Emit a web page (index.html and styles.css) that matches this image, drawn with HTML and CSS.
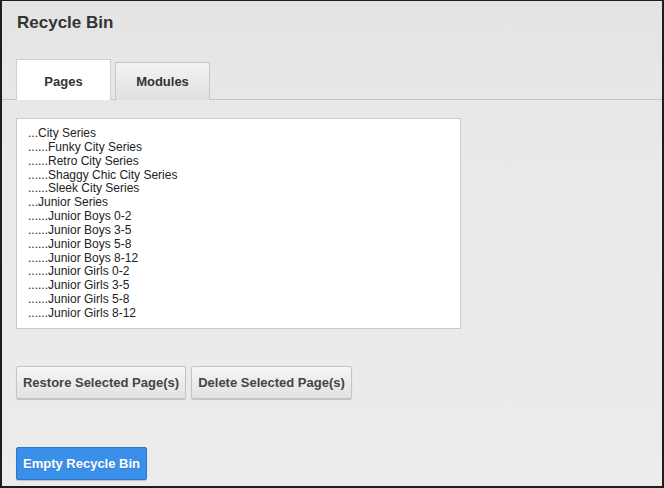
FILE: index.html
```html
<!DOCTYPE html>
<html>
<head>
<meta charset="utf-8">
<link rel="stylesheet" href="styles.css">
</head>
<body>
<div class="frame">
  <h1 class="title">Recycle Bin</h1>
  <div class="tabs">
    <div class="tab active">Pages</div>
    <div class="tab">Modules</div>
  </div>
  <div class="content">
    <div class="listbox">
      <div>...City Series</div>
      <div>......Funky City Series</div>
      <div>......Retro City Series</div>
      <div>......Shaggy Chic City Series</div>
      <div>......Sleek City Series</div>
      <div>...Junior Series</div>
      <div>......Junior Boys 0-2</div>
      <div>......Junior Boys 3-5</div>
      <div>......Junior Boys 5-8</div>
      <div>......Junior Boys 8-12</div>
      <div>......Junior Girls 0-2</div>
      <div>......Junior Girls 3-5</div>
      <div>......Junior Girls 5-8</div>
      <div>......Junior Girls 8-12</div>
    </div>
    <div class="actions">
      <button class="btn">Restore Selected Page(s)</button>
      <button class="btn">Delete Selected Page(s)</button>
    </div>
    <div class="empty-row">
      <button class="btn btn-primary">Empty Recycle Bin</button>
    </div>
  </div>
</div>
</body>
</html>
```

FILE: styles.css
```css
html, body {
  margin: 0;
  padding: 0;
}
body {
  width: 664px;
  height: 488px;
  font-family: "Liberation Sans", Arial, sans-serif;
}
.frame {
  box-sizing: border-box;
  width: 664px;
  height: 488px;
  border: 2px solid #1e1e1e;
  border-top-width: 1px;
  background: linear-gradient(to bottom, #e4e4e4 0%, #e9e9e9 30%, #ececec 100%);
  overflow: hidden;
}
.title {
  margin: 0;
  padding: 12px 0 0 15px;
  font-size: 17px;
  font-weight: bold;
  color: #333;
  line-height: 19px;
  height: 46px;
  box-sizing: border-box;
}
.tabs {
  display: flex;
  align-items: flex-end;
  gap: 4px;
  padding-left: 14px;
  height: 53px;
  border-bottom: 1px solid #c4c4c4;
  box-sizing: border-box;
}
.tab {
  box-sizing: border-box;
  width: 95px;
  height: 38px;
  margin-bottom: -1px;
  border: 1px solid #c6c6c6;
  border-bottom: none;
  background: linear-gradient(to bottom, #f3f3f3, #e1e1e1);
  font-size: 13px;
  font-weight: bold;
  color: #333;
  display: flex;
  align-items: center;
  justify-content: center;
  padding-top: 0;
}
.tab.active {
  height: 41px;
  background: #fff;
  padding-top: 3px;
  border-color: #cfcfcf;
}
.content {
  padding: 18px 0 0 14px;
}
.listbox {
  box-sizing: border-box;
  width: 445px;
  height: 211px;
  background: #fff;
  border: 1px solid #cbcbcb;
  padding: 8px 11px;
  font-size: 12px;
  line-height: 13.85px;
  color: #222;
}
.actions {
  display: flex;
  gap: 5px;
  margin-top: 37px;
}
.btn {
  box-sizing: border-box;
  height: 33px;
  padding: 0;
  white-space: nowrap;
  font-family: "Liberation Sans", Arial, sans-serif;
  font-size: 13px;
  font-weight: bold;
  color: #444;
  background: linear-gradient(to bottom, #f6f6f6, #e2e2e2);
  border: 1px solid #c4c4c4;
  border-radius: 2px;
  box-shadow: 0 1px 1px rgba(0,0,0,0.18);
}
.actions .btn:first-child {
  width: 170px;
}
.actions .btn:last-child {
  width: 161px;
}
.empty-row {
  margin-top: 48px;
}
.btn-primary {
  width: 131px;
  color: #fff;
  background: #3a8fe8;
  border-color: #2b78c9;
  text-shadow: 0 1px 0 rgba(0,0,0,0.15);
}
```
